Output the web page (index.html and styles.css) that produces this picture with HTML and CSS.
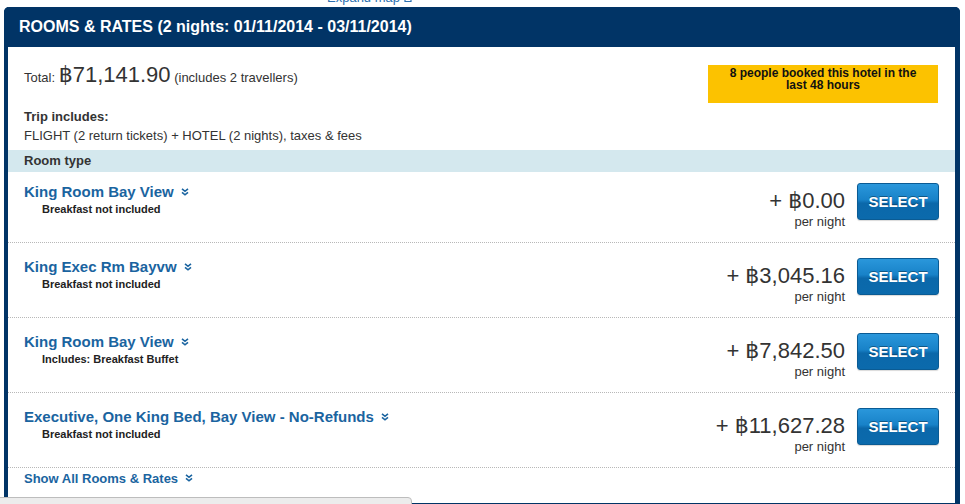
FILE: index.html
```html
<!DOCTYPE html>
<html>
<head>
<meta charset="utf-8">
<link rel="stylesheet" href="styles.css">
</head>
<body>
<div class="mapbar"><a class="maplink">Expand map <svg class="ext" width="10" height="9" viewBox="0 0 10 9"><path d="M1 2.5h4M1 2.5v6h6v-3" fill="none" stroke="#2b6fb0" stroke-width="1.2"/><path d="M5 4.5L9 0.5M6 0.5h3v3" fill="none" stroke="#2b6fb0" stroke-width="1.2"/></svg></a></div>
<div class="panel">
  <div class="panel-head">ROOMS &amp; RATES (2 nights: 01/11/2014 - 03/11/2014)</div>
  <div class="summary">
    <div class="total-row">
      <div class="total">Total: <span class="total-price">฿71,141.90</span> (includes 2 travellers)</div>
      <div class="notice">8 people booked this hotel in the last 48 hours</div>
    </div>
    <div class="trip-label">Trip includes:</div>
    <div class="trip-text">FLIGHT (2 return tickets) + HOTEL (2 nights), taxes &amp; fees</div>
  </div>
  <div class="band">Room type</div>

  <div class="room room-first">
    <div class="room-info">
      <div class="room-name">King Room Bay View <svg class="chev" width="8" height="8" viewBox="0 0 8 8"><path d="M1 0.8L4 3.3L7 0.8M1 4.3L4 6.8L7 4.3" fill="none" stroke="#1a64a0" stroke-width="1.6"/></svg></div>
      <div class="room-sub">Breakfast not included</div>
    </div>
    <div class="room-price"><div class="price">+ ฿0.00</div><div class="per">per night</div></div>
    <button class="select">SELECT</button>
  </div>

  <div class="room">
    <div class="room-info">
      <div class="room-name">King Exec Rm Bayvw <svg class="chev" width="8" height="8" viewBox="0 0 8 8"><path d="M1 0.8L4 3.3L7 0.8M1 4.3L4 6.8L7 4.3" fill="none" stroke="#1a64a0" stroke-width="1.6"/></svg></div>
      <div class="room-sub">Breakfast not included</div>
    </div>
    <div class="room-price"><div class="price">+ ฿3,045.16</div><div class="per">per night</div></div>
    <button class="select">SELECT</button>
  </div>

  <div class="room">
    <div class="room-info">
      <div class="room-name">King Room Bay View <svg class="chev" width="8" height="8" viewBox="0 0 8 8"><path d="M1 0.8L4 3.3L7 0.8M1 4.3L4 6.8L7 4.3" fill="none" stroke="#1a64a0" stroke-width="1.6"/></svg></div>
      <div class="room-sub">Includes: Breakfast Buffet</div>
    </div>
    <div class="room-price"><div class="price">+ ฿7,842.50</div><div class="per">per night</div></div>
    <button class="select">SELECT</button>
  </div>

  <div class="room">
    <div class="room-info">
      <div class="room-name">Executive, One King Bed, Bay View - No-Refunds <svg class="chev" width="8" height="8" viewBox="0 0 8 8"><path d="M1 0.8L4 3.3L7 0.8M1 4.3L4 6.8L7 4.3" fill="none" stroke="#1a64a0" stroke-width="1.6"/></svg></div>
      <div class="room-sub">Breakfast not included</div>
    </div>
    <div class="room-price"><div class="price">+ ฿11,627.28</div><div class="per">per night</div></div>
    <button class="select">SELECT</button>
  </div>

  <div class="show-all">Show All Rooms &amp; Rates <svg class="chev" width="8" height="8" viewBox="0 0 8 8"><path d="M1 0.8L4 3.3L7 0.8M1 4.3L4 6.8L7 4.3" fill="none" stroke="#1a64a0" stroke-width="1.6"/></svg></div>
</div>
<div class="statusbar"></div>
</body>
</html>
```
FILE: styles.css
```css
* { box-sizing: border-box; }
html, body { margin: 0; padding: 0; background: #fff; }
body {
  font-family: "Liberation Sans", Arial, "DejaVu Sans", sans-serif;
  color: #333;
  font-size: 13px;
  overflow: hidden;
  height: 504px;
}
.mapbar {
  height: 7px;
  overflow: hidden;
  padding-left: 327px;
}
.maplink {
  display: block;
  margin-top: -9px;
  font-size: 13px;
  line-height: 13px;
  color: #2b6fb0;
}
.ext { vertical-align: 0; }
.panel {
  margin-left: 4px;
  width: 956px;
  border-left: 4px solid #013466;
  border-right: 5px solid #013466;
  border-bottom: 4px solid #013466;
  border-radius: 5px 5px 0 0;
}
.panel-head {
  margin-left: -4px;
  margin-right: -5px;
  height: 40px;
  line-height: 40px;
  padding-left: 15px;
  background: #013466;
  color: #fff;
  font-weight: bold;
  font-size: 16px;
  border-radius: 5px 5px 0 0;
}
.summary {
  padding: 15px 17px 0 16px;
}
.total-row {
  display: flex;
  justify-content: space-between;
  align-items: flex-start;
}
.total {
  line-height: 26px;
  font-size: 13px;
}
.total-price {
  font-size: 22px;
}
.notice {
  margin-top: 3px;
  width: 230px;
  height: 38px;
  padding: 2px 10px 0;
  background: #fcc200;
  color: #111;
  font-weight: bold;
  font-size: 12px;
  line-height: 12px;
  text-align: center;
}
.trip-label {
  margin-top: 4px;
  font-weight: bold;
  line-height: 19px;
}
.trip-text {
  line-height: 19px;
  margin-bottom: 5px;
}
.band {
  height: 22px;
  line-height: 22px;
  padding-left: 16px;
  background: #d4e8ee;
  font-weight: bold;
}
.room {
  display: flex;
  align-items: flex-start;
  height: 75px;
  padding: 15px 16px 0;
  border-bottom: 1px dotted #b8b8b8;
}
.room-first {
  height: 71px;
  padding-top: 11px;
}
.room-info { flex: 1; }
.room-name {
  color: #1a64a0;
  font-weight: bold;
  font-size: 15px;
  line-height: 18px;
}
.chev { margin-left: 3px; vertical-align: 1px; }
.room-sub {
  margin-top: 1px;
  padding-left: 18px;
  font-weight: bold;
  font-size: 11px;
  line-height: 14px;
  color: #222;
}
.room-price {
  margin-top: 5px;
  text-align: right;
}
.price {
  font-size: 22px;
  line-height: 26px;
  color: #333;
}
.per {
  font-size: 13px;
  line-height: 16px;
}
.select {
  margin-left: 12px;
  width: 82px;
  height: 37px;
  border: 1px solid #0a5b94;
  border-radius: 3px;
  background: linear-gradient(#2a97db 0%, #1882c8 45%, #0b68aa 55%, #0b6aac 100%);
  color: #fff;
  font-family: "Liberation Sans", Arial, sans-serif;
  font-weight: bold;
  font-size: 15px;
  padding: 0;
  text-shadow: 0 -1px 0 rgba(0,0,0,0.35);
  box-shadow: 0 1px 1px rgba(0,0,0,0.15);
}
.show-all {
  height: 35px;
  padding: 3px 16px 0;
  color: #1a64a0;
  font-weight: bold;
  font-size: 13px;
  line-height: 16px;
}
.statusbar {
  position: fixed;
  left: -1px;
  top: 497px;
  width: 413px;
  height: 20px;
  background: #ececec;
  border: 1px solid #bdbdbd;
  border-radius: 0 4px 0 0;
}
```
